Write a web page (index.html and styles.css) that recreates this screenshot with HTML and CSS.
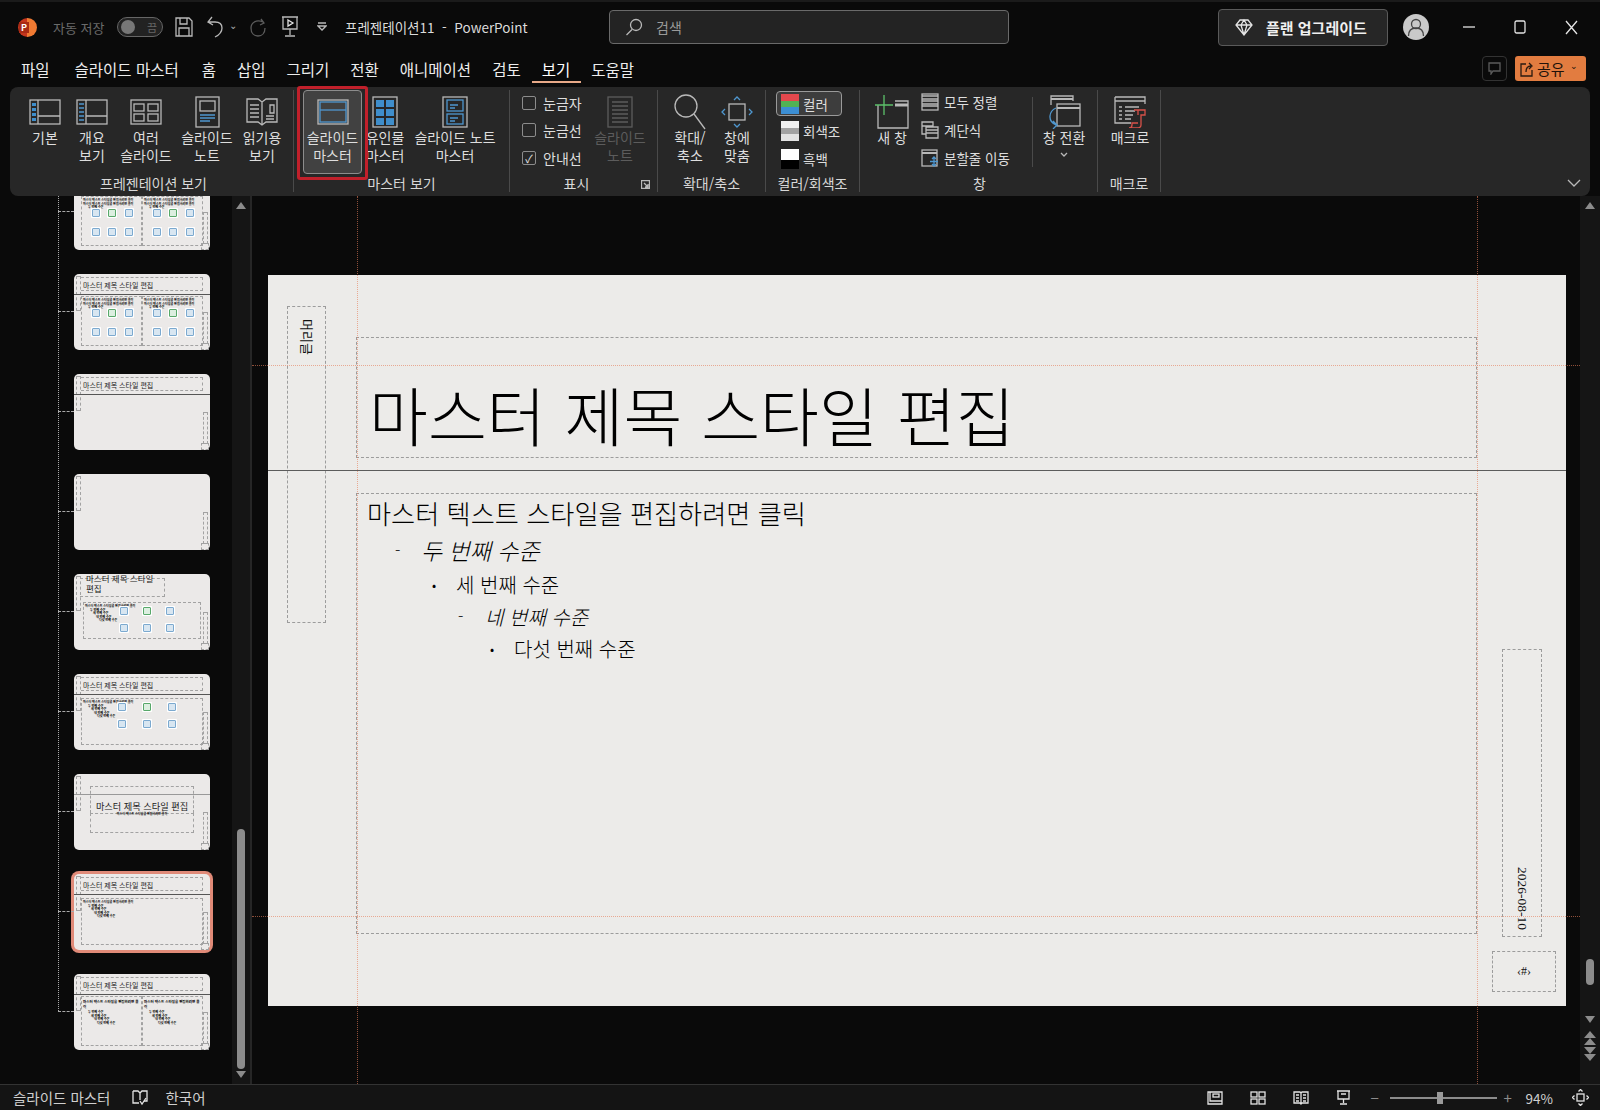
FILE: index.html
```html
<!DOCTYPE html>
<html lang="ko">
<head>
	<title>프레젠테이션11 - PowerPoint</title>
	<meta charset="UTF-8">
	<link rel="stylesheet" href="styles.css">
</head>
<body>
<div class="app">
	<!-- title bar -->
	<div class="titlebar">
		<div class="tb-left">
			<div class="logo"><span>P</span></div>
			<span class="autosave">자동 저장</span>
			<div class="toggle"><i></i><span>끔</span></div>
			<svg class="ic qa-save" width="18" height="20" viewBox="0 0 18 20"><path d="M1 1h13l3 3v15H1z"/><path d="M5 1v6h7V1M4 19v-8h10v8"/></svg>
			<svg class="ic qa-undo" width="18" height="22" viewBox="0 0 18 22"><path d="M6 1L2 6l5 3M2 6h7c5 0 7 3 7 6 0 4-3 7-7 9"/></svg>
			<span class="caret">&#8964;</span>
			<svg class="ic dim qa-redo" width="18" height="20" viewBox="0 0 18 20"><path d="M12 2l3 4-4 2M14 5C7 2 2 6 2 11s3 8 7 8 7-3 7-8"/></svg>
			<svg class="ic qa-show" width="18" height="22" viewBox="0 0 18 22"><path d="M1 1h16M2 1v12h14V1M9 13v6M4 20h10"/><path class="wh" d="M7 4l5 3-5 3z"/></svg>
			<svg class="ic qa-more" width="10" height="10" viewBox="0 0 10 10"><path d="M1 1h8M1 4l4 4 4-4z"/></svg>
			<span class="doc-title">프레젠테이션11&nbsp; - &nbsp;PowerPoint</span>
		</div>
		<div class="search">
			<svg class="ic" width="18" height="18" viewBox="0 0 18 18"><circle cx="11" cy="7" r="5.5"/><path d="M7 11.5L1.5 17"/></svg>
			<span>검색</span>
		</div>
		<div class="upgrade">
			<svg class="ic wht" width="18" height="18" viewBox="0 0 18 18"><path d="M5 2h8l4 5-8 10L1 7zM1 7h16M6 7l3 10 3-10M6 7l3-5 3 5"/></svg>
			<span>플랜 업그레이드</span>
		</div>
		<div class="avatar">
			<svg width="26" height="26" viewBox="0 0 26 26"><circle cx="13" cy="13" r="13" fill="#c9c9c9"/><circle cx="13" cy="10" r="4.5" fill="none" stroke="#444" stroke-width="1.3"/><path d="M5.5 22c0-6 3-8 7.500-8s7.500 2 7.500 8" fill="none" stroke="#444" stroke-width="1.300"/></svg>
		</div>
		<div class="winbtns">
			<svg class="ic wht" width="12" height="12" viewBox="0 0 12 12"><path d="M0 6h12"/></svg>
			<svg class="ic wht" width="12" height="14" viewBox="0 0 12 14"><rect x="1" y="1" width="10" height="12" rx="1.500"/></svg>
			<svg class="ic wht" width="13" height="15" viewBox="0 0 13 15"><path d="M1 1l11 13M12 1L1 14"/></svg>
		</div>
	</div>

	<!-- tabs -->
	<div class="tabs">
		<span class="tab-file">파일</span>
		<span class="tab-master">슬라이드 마스터</span>
		<span>홈</span>
		<span>삽입</span>
		<span>그리기</span>
		<span>전환</span>
		<span>애니메이션</span>
		<span>검토</span>
		<span class="tab-on">보기</span>
		<span>도움말</span>
		<div class="tabs-right">
			<div class="comment-btn">
				<svg class="ic dim" width="13" height="13" viewBox="0 0 13 13"><path d="M1 1h11v8H5l-2 3V9H1z"/></svg>
			</div>
			<div class="share-btn">
				<svg class="ic dark" width="14" height="16" viewBox="0 0 14 16"><path d="M6 3H1v12h11V9M6 11c0-4 2-6 5-6M9 2l3 3-3 3"/></svg>
				<span>공유</span>
				<span class="share-caret">&#8964;</span>
			</div>
		</div>
	</div>

	<!-- ribbon -->
	<div class="ribbon">
		<div class="group g1">
			<div class="items">
				<div class="rb w46">
					<div class="rb-ic"><svg class="ic" width="32" height="26" viewBox="0 0 32 26"><rect x="1" y="1" width="30" height="24"/><path d="M9 1v24M9 17h22"/><path class="blf" d="M3 4h4v3H3zM3 9h4v3H3zM3 14h4v3H3zM3 19h4v3H3z"/></svg></div>
					<div class="rb-tx">기본</div>
				</div>
				<div class="rb w48">
					<div class="rb-ic"><svg class="ic" width="32" height="26" viewBox="0 0 32 26"><rect x="1" y="1" width="30" height="24"/><path d="M10 1v24M10 17h21"/><path class="bl" d="M3 5h5M3 9h5M3 13h5M3 17h5M3 21h5"/></svg></div>
					<div class="rb-tx">개요<br>보기</div>
				</div>
				<div class="rb w60">
					<div class="rb-ic"><svg class="ic" width="32" height="26" viewBox="0 0 32 26"><rect x="1" y="1" width="30" height="24"/><rect x="4" y="5" width="10" height="7"/><rect x="18" y="5" width="10" height="7"/><rect x="4" y="15" width="10" height="7"/><rect x="18" y="15" width="10" height="7"/></svg></div>
					<div class="rb-tx">여러<br>슬라이드</div>
				</div>
				<div class="rb w62">
					<div class="rb-ic"><svg class="ic" width="25" height="32" viewBox="0 0 25 32"><rect x="1" y="1" width="23" height="30"/><rect x="5" y="5" width="15" height="10"/><path class="bl" d="M5 19h15M5 22h15M5 25h10"/></svg></div>
					<div class="rb-tx">슬라이드<br>노트</div>
				</div>
				<div class="rb w48">
					<div class="rb-ic"><svg class="ic" width="32" height="30" viewBox="0 0 32 30"><path d="M1 2h11l4 3 4-3h11v23H20l-4 3-4-3H1zM16 5v23"/><path d="M4 8h9M4 12h9M4 16h9M4 20h9M24 8h4v8h-4zM20 19h8M20 22h8"/></svg></div>
					<div class="rb-tx">읽기용<br>보기</div>
				</div>
			</div>
			<div class="rb-label">프레젠테이션 보기</div>
		</div>

		<div class="group g2">
			<div class="items">
				<div class="rb w59 rb-on">
					<div class="rb-ic"><svg class="ic" width="32" height="26" viewBox="0 0 32 26"><rect x="1" y="1" width="30" height="24"/><rect class="bl" x="3" y="3" width="26" height="20"/><path class="bl" d="M3 11h26"/></svg></div>
					<div class="rb-tx">슬라이드<br>마스터</div>
				</div>
				<div class="rb w46">
					<div class="rb-ic"><svg class="ic" width="26" height="32" viewBox="0 0 26 32"><rect x="1" y="1" width="24" height="30"/><path class="blf" d="M4 4h8v7H4zM14 4h8v7h-8zM4 13h8v7H4zM14 13h8v7h-8zM4 22h8v7H4zM14 22h8v7h-8z"/></svg></div>
					<div class="rb-tx">유인물<br>마스터</div>
				</div>
				<div class="rb w94">
					<div class="rb-ic"><svg class="ic" width="26" height="32" viewBox="0 0 26 32"><rect x="1" y="1" width="24" height="30"/><rect class="bl" x="5" y="4" width="16" height="11"/><rect class="bl" x="5" y="18" width="16" height="10"/><path class="bl" d="M8 9h8M8 12h5M8 22h8M8 25h5"/></svg></div>
					<div class="rb-tx">슬라이드 노트<br>마스터</div>
				</div>
			</div>
			<div class="rb-label">마스터 보기</div>
			<div class="redbox"></div>
		</div>

		<div class="group g3">
			<div class="items">
				<div class="cb-col">
					<div class="cb-row"><i class="cb"></i>눈금자</div>
					<div class="cb-row"><i class="cb"></i>눈금선</div>
					<div class="cb-row"><i class="cb cb-on">&#10003;</i>안내선</div>
				</div>
				<div class="rb w60 rb-off">
					<div class="rb-ic"><svg class="ic dim" width="26" height="32" viewBox="0 0 26 32"><rect x="1" y="1" width="24" height="30"/><path d="M5 6h16M5 10h16M5 14h16M5 18h16M5 22h16M5 26h16"/></svg></div>
					<div class="rb-tx">슬라이드<br>노트</div>
				</div>
			</div>
			<div class="rb-label">표시</div>
			<svg class="launcher ic" width="9" height="9" viewBox="0 0 9 9"><path d="M.5 8.500V.5h8v8zM3 3l4 4M7 4v3H4"/></svg>
		</div>

		<div class="group g4">
			<div class="items">
				<div class="rb w46">
					<div class="rb-ic"><svg class="ic" width="32" height="36" viewBox="0 0 32 36"><circle cx="12" cy="12" r="11"/><path d="M20 20l11 15"/></svg></div>
					<div class="rb-tx">확대/<br>축소</div>
				</div>
				<div class="rb w48">
					<div class="rb-ic"><svg class="ic" width="32" height="34" viewBox="0 0 32 34"><rect x="8" y="9" width="16" height="16"/><path class="bl" d="M13 5l3-3 3 3M13 29l3 3 3-3M4 14l-3 3 3 3M28 14l3 3-3 3"/></svg></div>
					<div class="rb-tx">창에<br>맞춤</div>
				</div>
			</div>
			<div class="rb-label">확대/축소</div>
		</div>

		<div class="group g5">
			<div class="items">
				<div class="sw-col">
					<div class="sw-row sw-on"><i class="sw sw-color"></i>컬러</div>
					<div class="sw-row"><i class="sw sw-gray"></i>회색조</div>
					<div class="sw-row"><i class="sw sw-bw"></i>흑백</div>
				</div>
			</div>
			<div class="rb-label">컬러/회색조</div>
		</div>

		<div class="group g6">
			<div class="items">
				<div class="rb w50">
					<div class="rb-ic"><svg class="ic" width="34" height="34" viewBox="0 0 34 34"><path d="M3 10v23h30V6H20"/><path d="M20 10h13" stroke-width="3"/><path class="gr" d="M9 0v20M0 10h18"/></svg></div>
					<div class="rb-tx">새 창</div>
				</div>
				<div class="win-col">
					<div class="win-row"><svg class="ic" width="18" height="18" viewBox="0 0 18 18"><rect x="1" y="1" width="16" height="16"/><path d="M1 6h16M1 11h16"/><path d="M1 3h16M1 8h16M1 13h16" stroke-width="1.500"/></svg>모두 정렬</div>
					<div class="win-row"><svg class="ic" width="18" height="18" viewBox="0 0 18 18"><path d="M1 1h11v4H1zM1 5v8h4M5 6h12v11H5zM5 9h12M5 12h12"/></svg>계단식</div>
					<div class="win-row"><svg class="ic" width="18" height="18" viewBox="0 0 18 18"><rect x="1" y="1" width="15" height="16"/><path d="M1 4h15" stroke-width="2"/><path class="bl" d="M13 8v9M9 12.500h8M11 10l2-2 2 2M11 15l2 2 2-2"/></svg>분할줄 이동</div>
				</div>
				<div class="inner-sep"></div>
				<div class="rb w60">
					<div class="rb-ic"><svg class="ic" width="34" height="34" viewBox="0 0 34 34"><path d="M4 10V1h22v5"/><path d="M4 4h22" stroke-width="2"/><rect x="10" y="9" width="23" height="22"/><path d="M10 13h23" stroke-width="2"/><path class="bl" d="M9 13c-7 3-9 13 0 17M6 26l4 4-4 4"/></svg></div>
					<div class="rb-tx">창 전환</div>
					<svg class="ic tiny-caret" width="8" height="5" viewBox="0 0 8 5"><path d="M1 1l3 3 3-3"/></svg>
				</div>
			</div>
			<div class="rb-label">창</div>
		</div>

		<div class="group g7">
			<div class="items">
				<div class="rb w50">
					<div class="rb-ic"><svg class="ic" width="32" height="32" viewBox="0 0 32 32"><path d="M1 1h30v7M1 1v26h16"/><path d="M1 5h30" stroke-width="1.500"/><path d="M5 11h3M5 15h3M5 19h3M5 23h3M11 11h14M11 15h10M11 19h8M11 23h6"/><path class="rd" d="M20 14h11v5h-4v10c0 2-2 3-4 3h-8c2 0 3-1 3-3v-2h6M24 14v5"/></svg></div>
					<div class="rb-tx">매크로</div>
				</div>
			</div>
			<div class="rb-label">매크로</div>
		</div>

		<svg class="ic collapse" width="14" height="8" viewBox="0 0 14 8"><path d="M1 1l6 6 6-6"/></svg>
	</div>

	<!-- main -->
	<div class="main">
		<div class="panel">
			<div class="thumbs">
				<div class="tree-line"></div>

				<div class="thumb">
					<div class="t-two">
						<div class="t-cbox"><p class="t-tx">마스터 텍스트 스타일을 편집하려면 클릭</p><p class="t-tx">마스터 텍스트 스타일을 편집하려면 클릭</p><p class="t-tx t-l2">두 번째 수준</p><div class="t-icons"><i></i><i class="g"></i><i></i><i></i><i></i><i></i></div></div>
						<div class="t-cbox"><p class="t-tx">마스터 텍스트 스타일을 편집하려면 클릭</p><p class="t-tx">마스터 텍스트 스타일을 편집하려면 클릭</p><p class="t-tx t-l2">두 번째 수준</p><div class="t-icons"><i></i><i class="g"></i><i></i><i></i><i></i><i></i></div></div>
					</div>
					<div class="t-date"></div><div class="t-num"></div>
				</div>

				<div class="thumb">
					<div class="t-vert"></div><div class="t-title"><span>마스터 제목 스타일 편집</span></div><div class="t-rule"></div>
					<div class="t-two">
						<div class="t-cbox"><p class="t-tx">마스터 텍스트 스타일을 편집하려면 클릭</p><p class="t-tx">마스터 텍스트 스타일을 편집하려면 클릭</p><p class="t-tx t-l2">두 번째 수준</p><div class="t-icons"><i></i><i class="g"></i><i></i><i></i><i></i><i></i></div></div>
						<div class="t-cbox"><p class="t-tx">마스터 텍스트 스타일을 편집하려면 클릭</p><p class="t-tx">마스터 텍스트 스타일을 편집하려면 클릭</p><p class="t-tx t-l2">두 번째 수준</p><div class="t-icons"><i></i><i class="g"></i><i></i><i></i><i></i><i></i></div></div>
					</div>
					<div class="t-date"></div><div class="t-num"></div>
				</div>

				<div class="thumb">
					<div class="t-vert"></div><div class="t-title"><span>마스터 제목 스타일 편집</span></div><div class="t-rule"></div>
					<div class="t-date"></div><div class="t-num"></div>
				</div>

				<div class="thumb">
					<div class="t-vert"></div><div class="t-date"></div><div class="t-num"></div>
				</div>

				<div class="thumb">
					<div class="t-vert"></div>
					<div class="t-title t-caption"><span>마스터 제목 스타일 편집</span></div>
					<div class="t-one t-one-low">
						<p class="t-tx">마스터 텍스트 스타일을 편집하려면 클릭</p><p class="t-tx t-l2">두 번째 수준</p><p class="t-tx t-l3">세 번째 수준</p><p class="t-tx t-l4">네 번째 수준</p><p class="t-tx t-l5">다섯 번째 수준</p>
						<div class="t-icons t-icons-wide"><i></i><i class="g"></i><i></i><i></i><i></i><i></i></div>
					</div>
					<div class="t-date"></div><div class="t-num"></div>
				</div>

				<div class="thumb">
					<div class="t-vert"></div><div class="t-title"><span>마스터 제목 스타일 편집</span></div><div class="t-rule"></div>
					<div class="t-one">
						<p class="t-tx">마스터 텍스트 스타일을 편집하려면 클릭</p><p class="t-tx t-l2">두 번째 수준</p><p class="t-tx t-l3">세 번째 수준</p><p class="t-tx t-l4">네 번째 수준</p><p class="t-tx t-l5">다섯 번째 수준</p>
						<div class="t-icons t-icons-wide"><i></i><i class="g"></i><i></i><i></i><i></i><i></i></div>
					</div>
					<div class="t-date"></div><div class="t-num"></div>
				</div>

				<div class="thumb">
					<div class="t-vert"></div><div class="t-rule t-rule-sec"></div>
					<div class="t-sec"><span>마스터 제목 스타일 편집</span></div>
					<div class="t-sec2"><p class="t-tx">마스터 텍스트 스타일을 편집하려면 클릭</p></div>
					<div class="t-date"></div><div class="t-num"></div>
				</div>

				<div class="thumb thumb-on">
					<div class="t-vert"></div><div class="t-title"><span>마스터 제목 스타일 편집</span></div><div class="t-rule"></div>
					<div class="t-one">
						<p class="t-tx">마스터 텍스트 스타일을 편집하려면 클릭</p><p class="t-tx t-l2">두 번째 수준</p><p class="t-tx t-l3">세 번째 수준</p><p class="t-tx t-l4">네 번째 수준</p><p class="t-tx t-l5">다섯 번째 수준</p>
					</div>
					<div class="t-date"></div><div class="t-num"></div>
				</div>

				<div class="thumb">
					<div class="t-vert"></div><div class="t-title"><span>마스터 제목 스타일 편집</span></div><div class="t-rule"></div>
					<div class="t-two t-two-plain">
						<div class="t-cbox"><p class="t-tx t-big">마스터 텍스트 스타일을 편집하려면 클릭</p><p class="t-tx t-l2">두 번째 수준</p><p class="t-tx t-l3">세 번째 수준</p><p class="t-tx t-l4">네 번째 수준</p><p class="t-tx t-l5">다섯 번째 수준</p></div>
						<div class="t-cbox"><p class="t-tx t-big">마스터 텍스트 스타일을 편집하려면 클릭</p><p class="t-tx t-l2">두 번째 수준</p><p class="t-tx t-l3">세 번째 수준</p><p class="t-tx t-l4">네 번째 수준</p><p class="t-tx t-l5">다섯 번째 수준</p></div>
					</div>
					<div class="t-date"></div><div class="t-num"></div>
				</div>
			</div>
			<div class="scroll">
				<i class="arr-up"></i>
				<div class="scroll-track"><div class="scroll-thumb"></div></div>
				<i class="arr-down"></i>
			</div>
		</div>

		<div class="canvas">
			<div class="slide">
				<div class="ph s-vert"><span>머리글</span></div>
				<div class="ph s-title"><h1>마스터 제목 스타일 편집</h1></div>
				<div class="s-rule"></div>
				<div class="ph s-body">
					<div class="lv lv1">마스터 텍스트 스타일을 편집하려면 클릭</div>
					<div class="lv lv2"><span class="mk">-</span>두 번째 수준</div>
					<div class="lv lv3"><span class="mk">•</span>세 번째 수준</div>
					<div class="lv lv4"><span class="mk">-</span>네 번째 수준</div>
					<div class="lv lv5"><span class="mk">•</span>다섯 번째 수준</div>
				</div>
				<div class="ph s-date"><span>2026-08-10</span></div>
				<div class="ph s-num"><span>‹#›</span></div>
			</div>
			<div class="guide gv gv1"></div>
			<div class="guide gv gv2"></div>
			<div class="guide gh gh1"></div>
			<div class="guide gh gh2"></div>
			<div class="vscroll">
				<i class="arr-up"></i>
				<div class="vscroll-track"><div class="vscroll-thumb"></div></div>
				<i class="arr-down"></i>
				<i class="arr-up arr-big arr-first"></i>
				<i class="arr-up arr-big"></i>
				<i class="arr-down arr-big arr-first2"></i>
				<i class="arr-down arr-big"></i>
			</div>
		</div>
	</div>

	<!-- status bar -->
	<div class="status">
		<span>슬라이드 마스터</span>
		<svg class="ic wht st-book" width="16" height="16" viewBox="0 0 16 16"><path d="M1 1h5l2 2 2-2h5v10h-3M8 3v7M1 1v12h6"/><path d="M8 11l2 3 4-6"/></svg>
		<span>한국어</span>
		<div class="st-right">
			<svg class="ic wht" width="16" height="14" viewBox="0 0 16 14"><path d="M1 1h14v12H1zM3 1v9h12"/><rect x="6" y="3" width="6" height="3"/></svg>
			<svg class="ic wht" width="16" height="14" viewBox="0 0 16 14"><rect x="1" y="1" width="6" height="5"/><rect x="9" y="1" width="6" height="5"/><rect x="1" y="8" width="6" height="5"/><rect x="9" y="8" width="6" height="5"/></svg>
			<svg class="ic wht" width="16" height="14" viewBox="0 0 16 14"><path d="M1 1h6l1 1 1-1h6v11H9l-1 1-1-1H1zM8 2v11M3 4h3M3 7h3M3 10h3M10 4h3M10 7h3M10 10h3"/></svg>
			<svg class="ic wht" width="15" height="15" viewBox="0 0 15 15"><path d="M1 1h13M2 1v8h11V1M7.500 9v4M4 14h7M5 4h5"/></svg>
			<div class="zoom">
				<span class="zm">&minus;</span>
				<div class="zm-track"><i></i></div>
				<span class="zm">+</span>
			</div>
			<span class="zm-val">94%</span>
			<svg class="ic wht" width="17" height="17" viewBox="0 0 17 17"><rect x="5" y="5" width="7" height="7"/><path d="M6.500 2.500l2-2 2 2M6.500 14.500l2 2 2-2M2.500 6.500l-2 2 2 2M14.500 6.500l2 2-2 2"/></svg>
		</div>
	</div>
</div>
</body>
</html>
```
FILE: styles.css
```css
*{
	box-sizing: border-box;
}
body{
	margin: 0;
	background-color: #0a0a0a;
	color: #e6e6e6;
	font-family: "Noto Sans CJK KR", "Noto Sans", sans-serif;
	font-size: 14px;
	overflow: hidden;
}
p, h1{
	margin: 0;
	font-weight: normal;
}
.app{
	width: 1600px;
	height: 1110px;
	display: flex;
	flex-direction: column;
}

/* svg line icons */
.ic{
	fill: none;
	stroke: #b9b9b9;
	stroke-width: 1.3;
	flex-shrink: 0;
}
.ic.dim{
	stroke: #5c5c5c;
}
.ic.wht{
	stroke: #e4e4e4;
}
.ic.dark{
	stroke: #2a1a10;
}
.ic .bl{
	stroke: #4f97cf;
}
.ic .blf{
	fill: #3f8ecb;
	stroke: none;
}
.ic .gr{
	stroke: #5cc06a;
}
.ic .rd{
	stroke: #d8524a;
}
.ic .wh{
	stroke: #e4e4e4;
}

/* title bar */
.titlebar{
	height: 48px;
	display: flex;
	align-items: center;
	flex-shrink: 0;
	padding-top: 4px;
	border-top: 2px solid #1b1b1b;
}
.tb-left{
	width: 609px;
	display: flex;
	align-items: center;
	padding-left: 18px;
}
.logo{
	width: 19px;
	height: 19px;
	border-radius: 50%;
	background: linear-gradient(90deg, #c4341c 50%, #f07a32 50%);
	position: relative;
}
.logo span{
	position: absolute;
	left: 1px;
	top: 4px;
	width: 10px;
	height: 11px;
	background-color: #a82a14;
	color: #fff;
	font-size: 9px;
	font-weight: bold;
	line-height: 11px;
	text-align: center;
}
.autosave{
	color: #6a6a6a;
	font-size: 13px;
	margin-left: 16px;
	width: 64px;
}
.toggle{
	width: 46px;
	height: 20px;
	border: 1.5px solid #666;
	border-radius: 10px;
	background-color: #222;
	display: flex;
	align-items: center;
	justify-content: space-between;
	padding: 0 5px 0 3px;
	color: #666;
	font-size: 11px;
}
.toggle i{
	width: 14px;
	height: 14px;
	border-radius: 50%;
	background-color: #777;
}
.qa-save{
	margin-left: 12px;
}
.qa-undo{
	margin-left: 13px;
}
.caret{
	color: #aaa;
	font-size: 10px;
	margin: -6px 0 0 5px;
	width: 9px;
}
.qa-redo{
	margin-left: 11px;
}
.qa-show{
	margin-left: 14px;
}
.qa-more{
	margin-left: 18px;
}
.doc-title{
	margin-left: 18px;
	font-size: 13.500px;
	color: #dcdcdc;
	white-space: nowrap;
}
.search{
	width: 400px;
	height: 34px;
	border: 1px solid #6a6a6a;
	border-radius: 4px;
	background-color: #232323;
	display: flex;
	align-items: center;
	padding-left: 15px;
	color: #9a9a9a;
	font-size: 14px;
	gap: 13px;
}
.upgrade{
	width: 170px;
	height: 37px;
	margin-left: 209px;
	border: 1px solid #5a5a5a;
	border-radius: 4px;
	background-color: #262626;
	display: flex;
	align-items: center;
	padding-left: 16px;
	gap: 13px;
	font-size: 15px;
	font-weight: bold;
	color: #f0f0f0;
	white-space: nowrap;
}
.avatar{
	margin-left: 15px;
	height: 26px;
}
.winbtns{
	display: flex;
	align-items: center;
	margin-left: 34px;
	gap: 39px;
}

/* tabs */
.tabs{
	height: 38px;
	display: flex;
	align-items: center;
	gap: 21px;
	padding: 3px 0 0 21px;
	font-size: 15.500px;
	flex-shrink: 0;
	color: #ededed;
}
.tab-file{
	margin-right: 4px;
}
.tab-master{
	margin-right: 2px;
}
.tab-on{
	position: relative;
	color: #fff;
}
.tab-on::after{
	content: "";
	position: absolute;
	left: -10px;
	right: -11px;
	bottom: -3px;
	height: 2px;
	background-color: #e8a988;
}
.tabs-right{
	margin-left: auto;
	display: flex;
	gap: 8px;
	padding-right: 14px;
}
.comment-btn{
	width: 25px;
	height: 25px;
	border: 1px solid #333;
	border-radius: 4px;
	display: flex;
	align-items: center;
	justify-content: center;
}
.share-btn{
	width: 71px;
	height: 25px;
	background-color: #e27c40;
	border-radius: 3px;
	color: #20120a;
	display: flex;
	align-items: center;
	padding-left: 5px;
	gap: 3px;
	font-size: 15px;
}
.share-caret{
	font-size: 9px;
	margin: -6px 0 0 2px;
}

/* ribbon */
.ribbon{
	height: 109px;
	margin: 1px 10px 0;
	background-color: #272727;
	border-radius: 8px;
	display: flex;
	padding: 3px 0 4px;
	position: relative;
	flex-shrink: 0;
}
.group{
	display: flex;
	flex-direction: column;
	border-right: 1px solid #4a4a4a;
	position: relative;
}
.g1{
	width: 284px;
	padding-left: 12px;
}
.g2{
	width: 216px;
	padding-left: 9px;
}
.g3{
	width: 148px;
	padding-left: 12px;
}
.g4{
	width: 108px;
	padding-left: 9px;
}
.g5{
	width: 94px;
	padding-left: 10px;
}
.g6{
	width: 238px;
	padding-left: 7px;
}
.g7{
	width: 63px;
	padding-left: 7px;
}
.items{
	display: flex;
	height: 84px;
	flex-shrink: 0;
}
.rb{
	display: flex;
	flex-direction: column;
	align-items: center;
	padding-top: 5px;
	flex-shrink: 0;
	border: 1px solid transparent;
	border-radius: 4px;
}
.w46{
	width: 46px;
}
.w48{
	width: 48px;
}
.w50{
	width: 50px;
}
.w59{
	width: 59px;
}
.w60{
	width: 60px;
}
.w62{
	width: 62px;
}
.w94{
	width: 94px;
}
.rb-on{
	background-color: #414141;
	border-color: #8c8c8c;
}
.rb-off{
	color: #5c5c5c;
}
.rb-ic{
	height: 32px;
	display: flex;
	align-items: center;
	justify-content: center;
}
.rb-tx{
	line-height: 18px;
	font-size: 14px;
	text-align: center;
	white-space: nowrap;
	color: #dedede;
}
.rb-off .rb-tx{
	color: #5c5c5c;
}
.tiny-caret{
	margin-top: 6px;
}
.rb-label{
	line-height: 18px;
	height: 18px;
	font-size: 14px;
	text-align: center;
	color: #d8d8d8;
}
.g1 .rb-label{
	margin-left: -8px;
}
.g2 .rb-label{
	margin-left: -9px;
}
.g3 .rb-label{
	margin-left: -12px;
	padding-right: 14px;
}
.g4 .rb-label{
	margin-left: -9px;
}
.g5 .rb-label{
	margin-left: -10px;
}
.g6 .rb-label{
	margin-left: -5px;
}
.g7 .rb-label{
	margin-left: -7px;
}
.redbox{
	position: absolute;
	left: 3px;
	top: -4px;
	width: 71px;
	height: 94px;
	border: 3px solid #c1202b;
	border-radius: 3px;
	pointer-events: none;
}
.launcher{
	position: absolute;
	right: 7px;
	bottom: 3px;
}
.collapse{
	position: absolute;
	right: 9px;
	bottom: 9px;
}

/* checkboxes */
.cb-col{
	width: 68px;
	flex-shrink: 0;
	margin-top: -1px;
}
.cb-row{
	height: 27.500px;
	display: flex;
	align-items: center;
	gap: 7px;
	font-size: 14px;
	color: #dedede;
}
.cb{
	width: 14px;
	height: 14px;
	border: 1px solid #8c8c8c;
	border-radius: 2px;
	font-style: normal;
	font-size: 11px;
	line-height: 12px;
	text-align: center;
}
.cb-on{
	color: #e6e6e6;
}

/* colour column */
.sw-col{
	width: 66px;
	padding-top: 1px;
}
.sw-row{
	height: 25px;
	margin-bottom: 2.500px;
	display: flex;
	align-items: center;
	gap: 4px;
	padding-left: 4px;
	font-size: 13.500px;
	color: #dedede;
	border: 1px solid transparent;
	border-radius: 4px;
}
.sw-on{
	background-color: #3d3d3d;
	border-color: #9a9a9a;
}
.sw{
	width: 18px;
	height: 20px;
}
.sw-color{
	background: linear-gradient(#e5484d 33%, #52b255 33% 66%, #3c8ed3 66%);
}
.sw-gray{
	background: linear-gradient(#f0f0f0 33%, #a2a2a2 33% 66%, #e2e2e2 66%);
}
.sw-bw{
	background: linear-gradient(#fff 55%, #000 55%);
}

/* window column */
.win-col{
	width: 95px;
	margin: -2px 0 0 4px;
	flex-shrink: 0;
}
.win-row{
	height: 28px;
	display: flex;
	align-items: center;
	gap: 5px;
	font-size: 13.500px;
	color: #dedede;
	white-space: nowrap;
}
.inner-sep{
	width: 1px;
	height: 70px;
	margin: 7px 1px 0 16px;
	background-color: #4a4a4a;
}

/* main */
.main{
	flex: 1;
	display: flex;
	min-height: 0;
}
.panel{
	width: 252px;
	flex-shrink: 0;
	display: flex;
	overflow: hidden;
	border-right: 2px solid #262626;
}
.thumbs{
	width: 232px;
	position: relative;
	padding: 0 0 0 74px;
	margin-top: -22px;
	display: flex;
	flex-direction: column;
	gap: 24px;
	flex-shrink: 0;
}
.tree-line{
	position: absolute;
	left: 58px;
	top: 0;
	height: 837px;
	border-left: 1px dotted #aaa;
}
.thumb{
	width: 136px;
	height: 76px;
	background-color: #ebe9e8;
	border-radius: 5px;
	position: relative;
	flex-shrink: 0;
	color: #222;
}
.thumb::before{
	content: "";
	position: absolute;
	left: -16px;
	top: 37px;
	width: 16px;
	border-top: 1px dashed #aaa;
}
.thumb-on{
	box-shadow: 0 0 0 3px #e08a78;
}
.t-vert, .t-title, .t-date, .t-num, .t-cbox, .t-one, .t-sec, .t-sec2{
	position: absolute;
	border: 1px dashed #a2a2a2;
}
.t-vert{
	left: 2px;
	top: 2px;
	width: 5px;
	height: 35px;
}
.t-title{
	left: 7px;
	top: 3px;
	width: 122px;
	height: 14px;
	padding-left: 2px;
	font-size: 7px;
	line-height: 14px;
	white-space: nowrap;
	border-left: none;
}
.t-caption{
	left: 6px;
	top: 4px;
	width: 85px;
	height: 19px;
	font-size: 8.500px;
	white-space: normal;
	border-left: none;
}
.t-caption span{
	display: block;
	margin-top: -6px;
	padding-left: 4px;
	width: 72px;
	line-height: 10px;
	word-break: keep-all;
}
.t-rule{
	position: absolute;
	left: 0;
	right: 0;
	top: 20px;
	height: 1px;
	background-color: #555;
}
.t-rule-sec{
	background-color: #999;
}
.t-date{
	left: 129px;
	top: 38px;
	width: 5px;
	height: 32px;
}
.t-num{
	left: 127px;
	top: 69px;
	width: 8px;
	height: 7px;
}
.t-two{
	position: absolute;
	left: 7px;
	top: 22px;
	width: 122px;
	height: 50px;
	display: flex;
}
.t-cbox{
	position: relative;
	flex: 1;
	padding: 2px 1px;
	overflow: hidden;
}
.t-one{
	left: 7px;
	top: 24px;
	width: 122px;
	height: 47px;
	padding: 2px 1px;
	overflow: hidden;
}
.t-one-low{
	left: 9px;
	top: 28px;
	width: 118px;
	height: 37px;
}
.t-tx{
	font-size: 3px;
	line-height: 3.500px;
	font-weight: bold;
	white-space: nowrap;
	color: #000;
}
.t-big{
	font-size: 3.500px;
	line-height: 5px;
	white-space: normal;
	margin-bottom: 2px;
}
.t-l2{
	margin-left: 5px;
}
.t-l3{
	margin-left: 8px;
}
.t-l4{
	margin-left: 11px;
}
.t-l5{
	margin-left: 14px;
}
.t-icons{
	position: absolute;
	left: 6px;
	right: 4px;
	top: 11px;
	display: grid;
	grid-template-columns: repeat(3, 1fr);
	row-gap: 9px;
	justify-items: center;
}
.t-icons-wide{
	left: 28px;
	right: 18px;
	top: 3px;
	row-gap: 7px;
}
.t-icons i{
	width: 10px;
	height: 10px;
	background-color: #fff;
	border-radius: 1px;
	display: flex;
	align-items: center;
	justify-content: center;
}
.t-icons i::after{
	content: "";
	width: 6px;
	height: 6px;
	border: 1px solid #7ba9cf;
	background-color: #d8e6f1;
	border-radius: 1px;
}
.t-icons i.g::after{
	border-color: #58a86a;
	background-color: #dcefe0;
}
.t-sec{
	left: 16px;
	top: 12px;
	width: 104px;
	height: 27px;
	border-bottom: none;
	font-size: 9.200px;
	line-height: 10px;
	text-align: center;
	white-space: nowrap;
	padding-top: 14px;
}
.t-sec2{
	left: 16px;
	top: 39px;
	width: 104px;
	height: 20px;
	text-align: center;
}
.t-sec2 .t-tx{
	margin-top: -1px;
}
.scroll{
	width: 18px;
	background-color: #151515;
	display: flex;
	flex-direction: column;
	align-items: center;
	padding: 6px 0;
	flex-shrink: 0;
}
.arr-up, .arr-down{
	width: 0;
	height: 0;
	border-left: 5px solid transparent;
	border-right: 5px solid transparent;
	flex-shrink: 0;
}
.arr-up{
	border-bottom: 7px solid #8c8c8c;
}
.arr-down{
	border-top: 7px solid #8c8c8c;
}
.scroll-track{
	flex: 1;
	width: 100%;
	display: flex;
	flex-direction: column;
	justify-content: flex-end;
	align-items: center;
	padding-bottom: 2px;
}
.scroll-thumb{
	width: 8px;
	height: 240px;
	border-radius: 4px;
	background-color: #8c8c8c;
}

/* canvas */
.canvas{
	flex: 1;
	position: relative;
	padding: 79px 0 0 16px;
	overflow: hidden;
	display: flex;
	align-items: flex-start;
}
.slide{
	width: 1298px;
	height: 731px;
	position: relative;
	background-color: #ecebe9;
	color: #111;
	flex-shrink: 0;
}
.ph{
	position: absolute;
	border: 1px dashed #9c9c9c;
}
.s-vert{
	left: 19px;
	top: 31px;
	width: 39px;
	height: 317px;
	padding-top: 12px;
	display: flex;
	justify-content: center;
}
.s-vert span{
	writing-mode: vertical-rl;
	text-orientation: sideways;
	font-size: 13px;
	line-height: 16px;
	height: 40px;
}
.s-title{
	left: 88px;
	top: 62px;
	width: 1121px;
	height: 121px;
	padding: 35px 0 0 12px;
}
.s-title h1{
	font-size: 64px;
	line-height: 80px;
	font-weight: 300;
	word-spacing: 1px;
	white-space: nowrap;
	color: #000;
}
.s-rule{
	position: absolute;
	left: 0;
	right: 0;
	top: 195px;
	height: 1px;
	background-color: #5c5c5c;
}
.s-body{
	left: 88px;
	top: 218px;
	width: 1121px;
	height: 441px;
	padding-top: 1px;
	font-weight: 300;
	color: #000;
}
.lv{
	display: flex;
	align-items: center;
	white-space: nowrap;
}
.lv1{
	height: 36px;
	margin-left: 10px;
	font-size: 26.200px;
}
.lv2{
	height: 38px;
	margin-left: 38px;
	font-size: 23px;
	font-style: italic;
}
.lv3{
	height: 30px;
	margin-left: 75px;
	font-size: 20px;
}
.lv4{
	height: 34px;
	margin-left: 101px;
	font-size: 20px;
	font-style: italic;
}
.lv5{
	height: 30px;
	margin-left: 133px;
	font-size: 20px;
}
.lv2 .mk{
	width: 26px;
	font-style: normal;
	font-size: 16px;
}
.lv3 .mk, .lv5 .mk{
	width: 24px;
	font-size: 13px;
}
.lv4 .mk{
	width: 27px;
	font-style: normal;
	font-size: 16px;
}
.s-date{
	left: 1234px;
	top: 374px;
	width: 40px;
	height: 288px;
	display: flex;
	justify-content: center;
	align-items: flex-end;
	padding-bottom: 6px;
}
.s-date span{
	writing-mode: vertical-rl;
	font-family: "Liberation Serif", serif;
	font-size: 13.500px;
	line-height: 16px;
}
.s-num{
	left: 1224px;
	top: 676px;
	width: 64px;
	height: 41px;
	display: flex;
	align-items: center;
	justify-content: center;
	font-family: "Liberation Serif", serif;
	font-size: 12px;
}
.guide{
	position: absolute;
	border: 0 dotted rgba(230, 125, 90, 0.6);
	pointer-events: none;
}
.gv{
	top: 0;
	bottom: 0;
	border-left-width: 1px;
}
.gv1{
	left: 105px;
}
.gv2{
	left: 1225px;
}
.gh{
	left: 0;
	width: 1328px;
	border-top-width: 1px;
}
.gh1{
	top: 169px;
}
.gh2{
	top: 720px;
}
.vscroll{
	position: absolute;
	right: 0;
	top: 0;
	bottom: 0;
	width: 20px;
	background-color: #151515;
	display: flex;
	flex-direction: column;
	align-items: center;
	padding: 6px 0 23px;
}
.vscroll-track{
	flex: 1;
	width: 100%;
	display: flex;
	flex-direction: column;
	align-items: center;
	padding-top: 750px;
}
.vscroll-thumb{
	width: 8px;
	height: 26px;
	border-radius: 4px;
	background-color: #8c8c8c;
}
.arr-big{
	border-left-width: 6px;
	border-right-width: 6px;
}
.arr-first{
	margin-top: 8px;
}
.arr-first2{
	margin-top: 2px;
}

/* status bar */
.status{
	height: 26px;
	flex-shrink: 0;
	border-top: 1px solid #333;
	background-color: #141414;
	display: flex;
	align-items: center;
	padding-left: 13px;
	font-size: 14.500px;
	color: #cfcfcf;
}
.st-book{
	margin: 0 17px 0 22px;
}
.st-right{
	margin-left: auto;
	display: flex;
	align-items: center;
	gap: 27px;
	padding-right: 11px;
}
.zoom{
	display: flex;
	align-items: center;
	margin-left: -8px;
}
.zm{
	color: #8c8c8c;
	font-size: 15px;
	line-height: 16px;
	width: 10px;
	text-align: center;
}
.zm-track{
	width: 107px;
	height: 2px;
	margin: 0 6px 0 10px;
	background-color: #8c8c8c;
	position: relative;
}
.zm-track i{
	position: absolute;
	left: 47px;
	top: -5px;
	width: 6px;
	height: 12px;
	background-color: #9a9a9a;
}
.zm-val{
	font-size: 13.500px;
	margin-left: -14px;
	margin-right: -8px;
}
```
